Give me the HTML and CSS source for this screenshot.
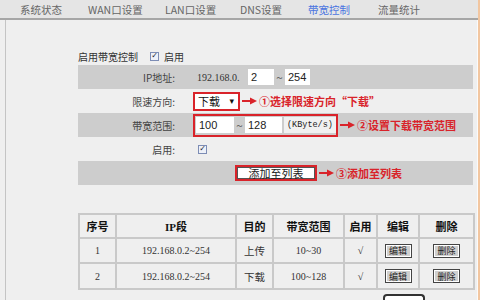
FILE: index.html
```html
<!DOCTYPE html>
<html lang="zh-CN">
<head>
  <meta charset="UTF-8">
  <title>带宽控制</title>
  <link rel="stylesheet" href="styles.css">
</head>
<body>
  <div class="page">
    <div class="nav">
      <span>系统状态</span>
      <span>WAN口设置</span>
      <span>LAN口设置</span>
      <span>DNS设置</span>
      <span class="active">带宽控制</span>
      <span>流量统计</span>
    </div>

    <div class="main">
      <div class="enable-line">
        <span>启用带宽控制</span>
        <span class="check">✓</span>
        <span>启用</span>
      </div>

      <div class="form">
        <div class="row shaded">
          <div class="label">IP地址:</div>
          <div class="value">
            <span class="ip-prefix">192.168.0.</span>
            <span class="input ip-from">2</span>
            <span class="tilde">~</span>
            <span class="input ip-to">254</span>
          </div>
        </div>

        <div class="row">
          <div class="label">限速方向:</div>
          <div class="value">
            <span class="select">下载 <span class="caret">▾</span></span>
            <span class="note">
              <svg class="arrow" width="16" height="8" viewBox="0 0 16 8"><path d="M0 4H9" stroke="#d9232a" stroke-width="2"/><path d="M8 0.5L15 4L8 7.5Z" fill="#d9232a"/></svg>
              ①选择限速方向“下载”
            </span>
          </div>
        </div>

        <div class="row shaded">
          <div class="label">带宽范围:</div>
          <div class="value">
            <span class="redbox">
              <span class="input bw-from">100</span>
              <span class="tilde">~</span>
              <span class="input bw-to">128</span>
              <span class="unit">(KByte/s)</span>
            </span>
            <span class="note">
              <svg class="arrow" width="16" height="8" viewBox="0 0 16 8"><path d="M0 4H9" stroke="#d9232a" stroke-width="2"/><path d="M8 0.5L15 4L8 7.5Z" fill="#d9232a"/></svg>
              ②设置下载带宽范围
            </span>
          </div>
        </div>

        <div class="row">
          <div class="label">启用:</div>
          <div class="value">
            <span class="check row-check">✓</span>
          </div>
        </div>

        <div class="row shaded">
          <div class="label"></div>
          <div class="value">
            <span class="add-btn">添加至列表</span>
            <span class="note">
              <svg class="arrow" width="16" height="8" viewBox="0 0 16 8"><path d="M0 4H9" stroke="#d9232a" stroke-width="2"/><path d="M8 0.5L15 4L8 7.5Z" fill="#d9232a"/></svg>
              ③添加至列表
            </span>
          </div>
        </div>
      </div>

      <table class="rules">
        <colgroup>
          <col style="width:37px"><col style="width:120px"><col style="width:37px"><col style="width:71px">
          <col style="width:33px"><col style="width:42px"><col style="width:55px">
        </colgroup>
        <tr class="head">
          <th>序号</th><th>IP段</th><th>目的</th><th>带宽范围</th><th>启用</th><th>编辑</th><th>删除</th>
        </tr>
        <tr>
          <td>1</td><td>192.168.0.2~254</td><td class="cjk">上传</td><td>10~30</td><td>√</td>
          <td><span class="mini-btn">编辑</span></td><td><span class="mini-btn">删除</span></td>
        </tr>
        <tr class="last">
          <td>2</td><td>192.168.0.2~254</td><td class="cjk">下载</td><td>100~128</td><td>√</td>
          <td><span class="mini-btn">编辑</span></td><td><span class="mini-btn">删除</span></td>
        </tr>
      </table>

      <div class="cut-box"></div>
    </div>
  </div>
</body>
</html>
```

FILE: styles.css
```css
* {
  box-sizing: border-box;
}

body {
  margin: 0;
  width: 480px;
  height: 300px;
  overflow: hidden;
  background-color: #efefef;
  font-family: "Liberation Serif", "Noto Sans CJK SC", serif;
  font-size: 10px;
  color: #333;
}

.page {
  height: 300px;
  border-right: 2px solid #f2c6a0;
}

/* top tabs */
.nav {
  height: 20px;
  background-color: #e5e5e5;
  border-bottom: 2px solid #a6a6a6;
  display: grid;
  grid-template-columns: 68px 77px 75px 68px 70px auto;
  align-items: center;
  padding-left: 20px;
  font-family: "Noto Sans CJK SC", sans-serif;
  font-size: 10.5px;
  color: #666;
}

.nav .active {
  color: #4a74e0;
}

.main {
  margin-left: 5px;
  height: 280px;
  border-left: 1px solid #c4c4c4;
  border-right: 1px solid #fafafa;
  padding: 30px 4px 0 72px;
}

.enable-line {
  height: 12px;
  display: flex;
  align-items: center;
  gap: 5px;
  margin-bottom: 3px;
  font-family: "Noto Sans CJK SC", sans-serif;
  font-size: 10px;
  color: #333;
}

.check {
  display: inline-flex;
  align-items: center;
  justify-content: center;
  width: 9px;
  height: 9px;
  border: 1px solid #7d8db5;
  background-color: #eef1f8;
  color: #223;
  font-family: "DejaVu Sans", sans-serif;
  font-size: 8px;
  line-height: 1;
}

.enable-line .check {
  margin-left: 7px;
}

/* form rows */
.form {
  display: flex;
  flex-direction: column;
}

.row {
  display: grid;
  grid-template-columns: 97px 1fr;
  column-gap: 18px;
  height: 24px;
  align-items: center;
}

.row.shaded {
  background-color: #cdcdcd;
}

.label {
  text-align: right;
  font-family: "Noto Sans CJK SC", sans-serif;
  font-size: 10px;
  color: #444;
}

.value {
  display: flex;
  align-items: center;
  height: 100%;
}

.ip-prefix {
  margin-left: 4px;
  width: 51px;
  font-size: 10px;
}

.input {
  display: inline-flex;
  align-items: center;
  height: 16px;
  padding-left: 3px;
  background-color: #fff;
  font-family: "Liberation Sans", sans-serif;
  font-size: 11px;
  color: #222;
}

.ip-from { width: 26px; }
.ip-to { width: 25px; }

.tilde {
  width: 11px;
  text-align: center;
  font-size: 11px;
}

.select {
  display: inline-flex;
  align-items: center;
  justify-content: space-between;
  width: 47px;
  height: 19px;
  padding: 0 4px 0 3px;
  border: 2px solid #d9232a;
  background-color: #fff;
  font-family: "Noto Sans CJK SC", sans-serif;
  font-size: 11px;
  color: #111;
}

.caret {
  font-size: 9px;
  font-family: "DejaVu Sans", sans-serif;
}

.note {
  display: inline-flex;
  align-items: center;
  gap: 1px;
  margin-left: 2px;
  font-family: "Noto Sans CJK SC", sans-serif;
  font-weight: bold;
  font-size: 11px;
  color: #d9232a;
  white-space: nowrap;
}

.redbox {
  display: inline-flex;
  align-items: center;
  width: 145px;
  height: 23px;
  padding-left: 1px;
  border: 2px solid #d9232a;
}

.bw-from { width: 38px; }
.bw-to { width: 37px; }

.unit {
  display: inline-flex;
  align-items: center;
  height: 16px;
  margin-left: 2px;
  padding-left: 3px;
  flex: 1;
  background-color: #f1f1f1;
  font-family: "Liberation Mono", monospace;
  font-size: 8.5px;
  color: #222;
}

.row-check {
  margin-left: 5px;
}

.add-btn {
  display: inline-flex;
  align-items: center;
  justify-content: center;
  width: 82px;
  height: 16px;
  margin-left: 42px;
  border: 2px solid #d9232a;
  background-color: #fff;
  box-shadow: inset 0 0 0 1px #555;
  font-family: "Noto Sans CJK SC", sans-serif;
  font-size: 11px;
  color: #222;
}

/* list table */
.rules {
  margin-top: 28px;
  width: 395px;
  border-collapse: collapse;
  table-layout: fixed;
}

.rules th,
.rules td {
  border: 2px solid #c9c9c9;
  padding: 0;
  text-align: center;
  font-size: 10px;
  color: #333;
}

.rules th {
  height: 24px;
  font-family: "Liberation Serif", "Noto Sans CJK SC", serif;
  font-weight: bold;
  font-size: 11px;
  color: #111;
}

.rules td {
  height: 25px;
}

.rules tr.last td {
  height: 26px;
}

.rules td.cjk {
  font-family: "Noto Sans CJK SC", sans-serif;
  font-size: 10.5px;
}

.mini-btn {
  display: inline-flex;
  align-items: center;
  justify-content: center;
  width: 27px;
  height: 14px;
  border: 1px solid #444;
  box-shadow: inset 0 0 0 1px #fff;
  background-color: #cfcfcf;
  font-family: "Noto Sans CJK SC", sans-serif;
  font-size: 9px;
  color: #222;
}

.cut-box {
  width: 42px;
  height: 12px;
  margin: 4px 0 0 305px;
  border: 2px solid #333;
  border-bottom: none;
  border-radius: 4px 4px 0 0;
  background-color: #fff;
}
```
